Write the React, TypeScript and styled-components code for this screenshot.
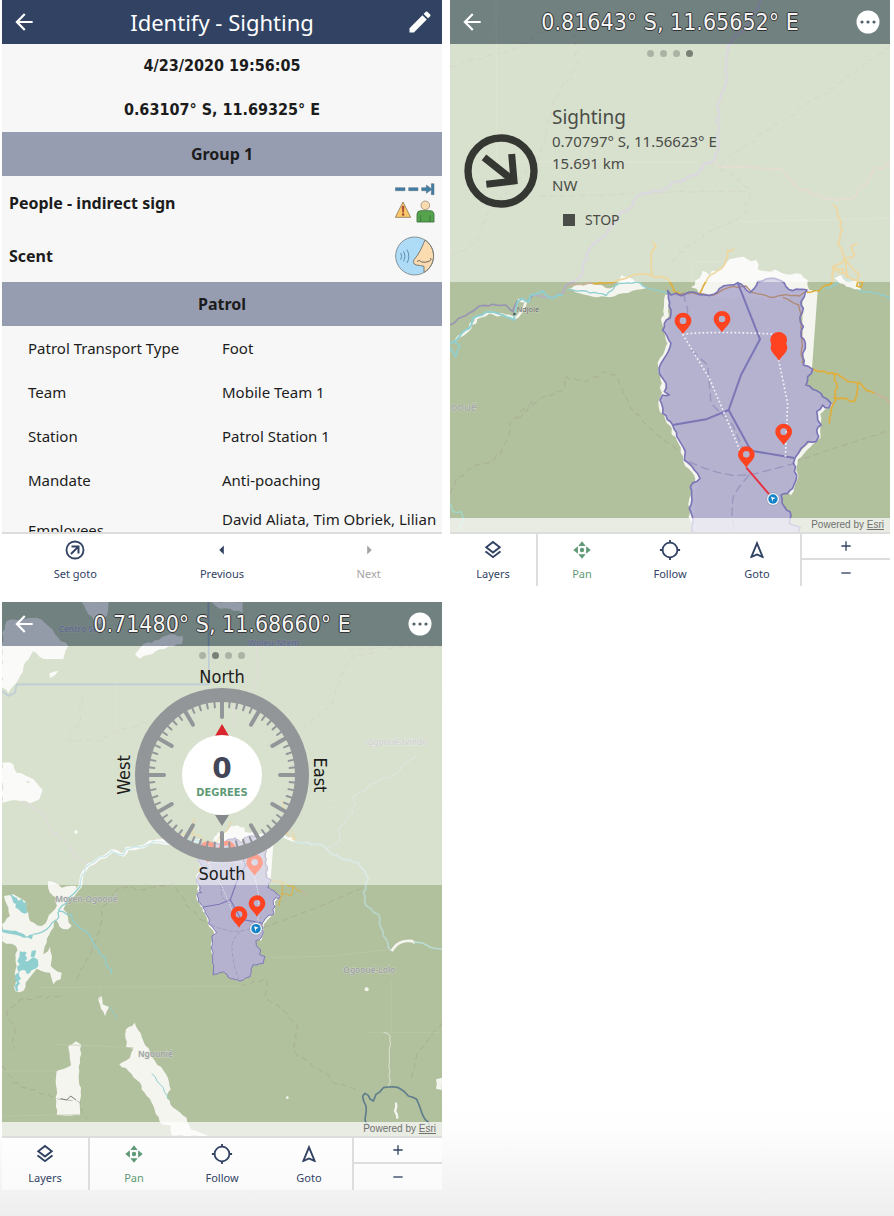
import React from "react";
import styled, { createGlobalStyle, css } from "styled-components";
import {
  MdAdd,
  MdArrowBack,
  MdArrowLeft,
  MdArrowRight,
  MdEdit,
  MdLocationSearching,
  MdOutlineLayers,
  MdOutlineNavigation,
  MdRemove,
  MdStop,
} from "react-icons/md";

const navy = "#314263";
const green = "#5f9a76";
const rule = "#dddddd";
const sans = `"Noto Sans", "Open Sans", sans-serif`;
const numeric = `"DejaVu Sans Condensed", "DejaVu Sans", sans-serif`;

const GlobalStyle = createGlobalStyle`
  * { box-sizing: border-box; }
  body { margin: 0; font-family: ${sans}; color: #1c1c1c; background: #fff; }
  button { font: inherit; color: inherit; background: none; border: 0; padding: 0; cursor: pointer; }
  h1, h2, h3, p, dl, dt, dd { margin: 0; font-weight: normal; }
`;

const Page = styled.main`
  min-height: 100vh;
  display: grid;
  grid-template-columns: repeat(2, minmax(0, 1fr));
  align-content: start;
  gap: 16px 8px;
  padding: 0 4px 24px 2px;
  background: linear-gradient(to top, #eeeeee 0, #fefefe 90px, #ffffff 120px);
`;

const Phone = styled.section`
  display: flex;
  flex-direction: column;
  min-width: 0;
`;

const TopBar = styled.header<{ $overMap?: boolean }>`
  flex: none;
  display: grid;
  grid-template-columns: 44px 1fr 44px;
  align-items: center;
  justify-items: center;
  height: 44px;
  color: #fff;
  background: ${(p) => (p.$overMap ? "rgba(49, 66, 98, 0.5)" : navy)};
`;

const Title = styled.h1<{ $outlined?: boolean }>`
  font-size: 22px;
  line-height: 44px;
  white-space: nowrap;
  ${(p) =>
    p.$outlined &&
    css`
      font-family: ${numeric};
      font-size: 23px;
      color: #f4f4f4;
      text-shadow: 1px 0 0 #333, -1px 0 0 #333, 0 1px 0 #333, 0 -1px 0 #333;
    `}
`;

const IconButton = styled.button`
  display: grid;
  place-items: center;
  width: 44px;
  height: 44px;
`;

/* Sighting record */

const Record = styled.div`
  flex: 1 1 0;
  min-height: 0;
  overflow: hidden;
  background: #f7f7f7;
`;

const Headline = styled.p`
  line-height: 44px;
  font-family: ${numeric};
  font-size: 16px;
  font-weight: bold;
  text-align: center;
`;

const GroupHeading = styled.h2`
  line-height: 44px;
  font-size: 16px;
  font-weight: bold;
  text-align: center;
  background: #979db0;
`;

const Observation = styled.div`
  display: flex;
  align-items: center;
  justify-content: space-between;
  height: 53px;
  padding: 0 7px;
  font-size: 16px;
  font-weight: bold;
`;

const Field = styled.div`
  display: grid;
  grid-template-columns: 194px 1fr;
  align-items: center;
  min-height: 44px;
  padding-left: 26px;
  font-size: 15px;
  line-height: 22px;
`;

const TallField = styled(Field)`
  min-height: 55px;
  dd {
    align-self: start;
    padding-top: 6px;
    white-space: nowrap;
  }
`;

/* Bottom bars */

const BottomBar = styled.nav<{ $columns: number }>`
  flex: none;
  display: grid;
  grid-template-columns: repeat(${(p) => p.$columns}, 1fr);
  height: 54px;
  border-top: 2px solid ${rule};
  background: rgba(255, 255, 255, 0.6);
`;

const BarButton = styled.button<{ $tone?: string; $divided?: boolean }>`
  display: flex;
  flex-direction: column;
  align-items: center;
  gap: 6px;
  padding-top: 5px;
  font-size: 11px;
  line-height: 14px;
  color: ${(p) => p.$tone ?? navy};
  border-right: ${(p) => (p.$divided ? `2px solid ${rule}` : "0")};
  svg {
    flex: none;
    width: 22px;
    height: 22px;
  }
`;

const ZoomStack = styled.div`
  display: grid;
  grid-template-rows: 1fr 1fr;
  color: ${navy};
`;

const ZoomButton = styled.button<{ $top?: boolean }>`
  display: grid;
  place-items: center;
  border-bottom: ${(p) => (p.$top ? `2px solid ${rule}` : "0")};
`;

/* Map screens */

const Stage = styled.div<{ $ratio: string }>`
  display: grid;
  aspect-ratio: ${(p) => p.$ratio};
  overflow: hidden;
  > * {
    grid-area: 1 / 1;
    min-width: 0;
    min-height: 0;
  }
`;

const MapCanvas = styled.svg`
  display: block;
  width: 100%;
  height: 100%;
  font-family: "Noto Sans", sans-serif;
`;

const StageLayers = styled.div`
  z-index: 1;
  display: flex;
  flex-direction: column;
`;

const Overlay = styled.div`
  display: flex;
  flex-direction: column;
  align-items: center;
  min-height: 238px;
  background: rgba(255, 255, 255, 0.5);
`;

const Pager = styled.div`
  display: flex;
  gap: 6px;
  padding: 6px 0 5px;
`;

const Dot = styled.span<{ $active: boolean }>`
  width: 7px;
  height: 7px;
  border-radius: 50%;
  background: ${(p) => (p.$active ? "#7a8076" : "#abb3a5")};
`;

const Attribution = styled.p`
  margin-top: auto;
  padding: 0 6px;
  text-align: right;
  font: 10px/14px "Liberation Sans", sans-serif;
  color: #707070;
  background: rgba(255, 255, 255, 0.7);
  a {
    color: inherit;
  }
`;

const Target = styled.div`
  align-self: stretch;
  display: grid;
  grid-template-columns: 74px 1fr;
  gap: 14px;
  align-items: center;
  padding: 42px 14px 0;
  color: #4a4c47;
`;

const TargetText = styled.div`
  padding-bottom: 6px;
  font-size: 15px;
  line-height: 22px;
  h2 {
    font-size: 19px;
    line-height: 26px;
  }
`;

const StopButton = styled.button`
  display: flex;
  align-items: center;
  gap: 4px;
  margin: 12px 0 0 5px;
  font-size: 14px;
  line-height: 24px;
`;

/* ---------- geometry helpers ---------- */

type Pt = [number, number];

function parse(list: string): Pt[] {
  return list
    .trim()
    .split(/\s+/)
    .map((pair) => pair.split(",").map(Number) as Pt);
}

/* Turns a coarse outline into a ragged natural line. */
function rough(list: string, amp = 5, closed = false, step = 13): string {
  const pts = parse(list);
  let seed = pts.length * 7919 + Math.round(pts[0][0]);
  const rnd = () => {
    seed = (seed * 16807) % 2147483647;
    return seed / 2147483647 - 0.5;
  };
  const out: string[] = [];
  const last = closed ? pts.length : pts.length - 1;
  for (let i = 0; i < last; i++) {
    const [x1, y1] = pts[i];
    const [x2, y2] = pts[(i + 1) % pts.length];
    const len = Math.hypot(x2 - x1, y2 - y1) || 1;
    const n = Math.max(1, Math.round(len / step));
    for (let k = 0; k < n; k++) {
      const off = k === 0 ? 0 : rnd() * 2 * amp;
      const x = x1 + ((x2 - x1) * k) / n - ((y2 - y1) / len) * off;
      const y = y1 + ((y2 - y1) * k) / n + ((x2 - x1) / len) * off;
      out.push(`${x.toFixed(1)},${y.toFixed(1)}`);
    }
  }
  if (!closed) out.push(pts[pts.length - 1].join(","));
  return `M${out.join("L")}${closed ? "Z" : ""}`;
}

const land = "#f5f5f0";
const water = "#8fcfd0";
const road = "#dfae3c";

const parkOutline = `665,872 675,885 690,880 705,887 740,876 760,884 790,886 805,882 820,866 850,855
 875,848 895,862 912,878 925,865 935,845 960,837 985,835 1005,842 1020,860 1040,872 1060,868 1083,870
 1075,890 1065,905 1072,925 1062,950 1072,980 1065,1010 1078,1030 1070,1060 1072,1095 1100,1108
 1085,1130 1080,1155 1100,1168 1125,1180 1130,1190 1155,1210 1148,1224 1130,1215 1112,1235 1115,1260 1125,1275
 1112,1290 1118,1310 1110,1325 1085,1325 1065,1345 1048,1372 1042,1390 1052,1425 1040,1465 1025,1480
 1005,1485 1015,1520 1032,1535 1030,1570 1062,1582 1052,1624 986,1634 970,1706 904,1733 846,1716
 805,1675 743,1696 740,1595 742,1560 730,1525 738,1500 733,1460 762,1435 745,1410 715,1380 718,1355
 705,1330 680,1275 650,1240 642,1200 650,1185 670,1185 655,1175 660,1150 640,1120 645,1090 675,1030
 650,990 655,970 672,955 675,930`;

/* The reserve with the rivers and roads next to it; w scales line widths. */
const Reserve = ({ w = 1 }: { w?: number }) => (
  <g fill="none" strokeLinejoin="round">
    <path
      fill={land}
      d={rough("735,862 770,812 790,825 835,795 850,778 880,772 930,780 935,808 1000,815 1050,820 1085,840 1090,870 1000,900 800,890 760,880", 6, true)}
    />
    <path fill={land} d="M1070,868L1115,872L1098,1105L1068,1105Z" />
    <path fill={land} d={rough("365,868 385,857 440,853 495,865 515,850 525,825 548,830 572,848 600,865 560,872 530,880 490,892 455,892 400,880", 4, true)} />
    <path stroke={land} strokeWidth={14} d={rough("665,885 655,970 672,1030 642,1090 655,1150 645,1220 705,1330 718,1380 755,1435 736,1500 742,1590", 5)} />
    <path stroke={land} strokeWidth={12} d={rough("1155,1210 1116,1240 1118,1310 1050,1375 1048,1440 1030,1482", 4)} />
    <path stroke={water} strokeWidth={4 * w} d={rough("365,868 420,873 480,887 500,870 520,850 570,846 600,862 640,872 665,880", 4)} />
    <path stroke={water} strokeWidth={4 * w} d={rough("1100,872 1160,858 1180,838 1215,845 1240,872 1280,878 1310,885 1332,895", 5)} />
    <path fill={land} d={rough("1165,835 1185,825 1200,845 1235,840 1245,870 1225,868 1180,850", 4, true)} />
    <g stroke={road} strokeWidth={5 * w}>
      <path d={rough("440,850 500,848 560,825 585,822 620,828 665,836 685,875 705,884 760,882 785,835 835,795 845,752 865,746", 3)} />
      <path d={rough("620,828 615,760 630,740 620,725", 3)} />
      <path d={rough("1083,877 1120,872 1155,852 1160,800 1195,780 1175,730 1188,690 1175,640 1162,614", 5)} />
      <path d={rough("1195,780 1225,765 1215,740 1235,732", 4)} />
      <path d={rough("1160,800 1190,808 1205,832 1195,780 1215,800 1240,822 1232,858 1245,862 1250,845 1225,840 1160,800", 4)} />
      <path d={rough("1072,1100 1120,1115 1160,1118 1172,1150 1165,1195 1200,1195 1225,1205 1235,1150 1205,1145 1165,1120", 4)} />
      <path d={rough("1235,1145 1262,1172 1285,1180", 3)} />
      <path d={rough("1170,1190 1155,1240 1150,1270", 3)} />
    </g>
    <path stroke="#cdb09a" strokeWidth={4 * w} d={rough("370,855 410,853 440,848", 2)} />
    <path stroke="#cdb09a" strokeWidth={4 * w} d={rough("1285,1180 1320,1195 1334,1210", 2)} />
    <path fill="#b5b1d1" fillOpacity={0.96} d={rough(parkOutline, 4, true)} />
    <path stroke="#b08a77" strokeWidth={4 * w} d={rough("690,884 740,878 800,886 850,862 900,858 920,878 985,892 1020,884 1060,888 1083,872", 3)} />
    <path stroke="#b08a77" strokeWidth={4 * w} d={rough("1010,892 1058,915 1066,970 1068,1090", 3)} />
    <g stroke="#9a95bd" strokeWidth={4 * w} strokeDasharray="26 12">
      <path d="M712,880L725,930L722,960M735,1050L785,1095L795,1210L860,1275L890,1345" />
      <path d="M730,1385Q790,1415 860,1426Q900,1428 940,1418L1046,1390M910,1425Q860,1480 860,1500L858,1550L875,1650L900,1720" />
    </g>
    <path stroke="#7b76b6" strokeWidth={5 * w} d={rough(parkOutline, 4, true)} />
    <path stroke="#7b76b6" strokeWidth={6 * w} d="M875,848L942,1018L885,1125L848,1230L780,1258L680,1275M848,1230L915,1352L1045,1374" />
    <g stroke="#ffffff" strokeWidth={5 * w} strokeDasharray={`${5 * w} ${7 * w}`} opacity={0.85}>
      <path d="M710,1003Q800,992 998,1003M710,1003L790,1135L835,1240L900,1395" />
      <path d="M998,1080L1025,1210L1018,1375" />
    </g>
  </g>
);

const Pin = ({ x, y, solid }: { x: number; y: number; solid?: boolean }) => (
  <path
    transform={`translate(${x} ${y})`}
    fill="#ff421f"
    fillRule="evenodd"
    d={`M0,0C-8,-14 -25,-24 -25,-40A25,24 0 0 1 25,-40C25,-24 8,-14 0,0Z${
      solid ? "" : "M-10,-40A10,10 0 1 0 10,-40A10,10 0 1 0 -10,-40Z"
    }`}
  />
);

const Position = ({ x, y }: { x: number; y: number }) => (
  <g transform={`translate(${x} ${y})`}>
    <circle r={20} fill="#8f93a8" opacity={0.6} />
    <circle r={18} fill="#f3f5fa" />
    <circle r={14} fill="#1583c6" />
    <path d="M-6,-7L8,-3L0,1L-1,9Z" fill="#fff" />
  </g>
);

const MapLabel = styled.text<{ $fill?: string }>`
  fill: ${(p) => p.$fill ?? "#a0a3a6"};
  stroke: #d9ddd3;
  stroke-width: 3px;
  stroke-opacity: 0.7;
  paint-order: stroke;
`;

const GotoMap = () => (
  <MapCanvas viewBox="12 0 1320 1596" preserveAspectRatio="xMidYMid slice" role="img" aria-label="Map of the reserve">
    <rect x={-1000} y={-1000} width={4000} height={4000} fill="#b1c09d" />
    <g fill="none" strokeLinejoin="round">
      <g stroke="#a9a894" strokeWidth={3} strokeDasharray="18 12" opacity={0.75}>
        <path d={rough("12,200 80,180 200,150 350,60 390,110 395,200 330,290 300,400 280,470 180,580 120,650 90,730 12,770", 6)} />
        <path d={rough("1332,140 1150,270 1000,370 850,470 820,500 880,540 910,575 890,650 800,690 720,740 680,790", 6)} />
        <path d={rough("280,590 500,585 700,575 905,574", 2)} />
        <path d={rough("215,1255 280,1200 355,1165 360,1130 420,1145 475,1115 510,1125 545,1200 560,1230 620,1290 730,1380", 5)} />
        <path d={rough("12,1480 30,1440 90,1395 120,1390 165,1360 190,1300 190,1270 260,1200", 5)} />
        <path d="M1046,1385L1150,1350L1334,1290" />
      </g>
      <g stroke="#c3ceb2" strokeWidth={2}>
        <path d="M150,0L152,485L752,487M740,785H840M740,785V860M880,665L1332,655" />
      </g>
      <path stroke="#b6b1be" strokeWidth={7} d={rough("945,0 920,50 880,100 845,140 840,250 815,310 818,440 805,480 770,500 750,525 690,545 650,570 585,582 550,625 520,640 485,700 430,745 410,800 405,830 360,855 350,880 310,893 260,885", 5)} />
      <path stroke="#9a94b4" strokeWidth={5} d={rough("260,885 245,905 215,900 200,935 180,915 100,918 50,950 12,975", 4)} />
      <path stroke="#d3b7a8" strokeWidth={4} d={rough("805,482 820,500 900,500 1010,510 1050,560 1140,600 1220,595 1255,555 1280,510 1332,495", 5)} />
      <path stroke={land} strokeWidth={8} d={rough("215,900 240,905 235,920 205,955 190,948 130,936 90,955 72,985 30,1020", 5)} />
      <path stroke={water} strokeWidth={6} d={rough("350,885 310,893 290,873 255,885 250,905 230,895 215,905 205,960 170,945 120,936 80,955 70,985 40,1010 12,1030", 4)} />
      <path stroke={water} strokeWidth={5} d={rough("25,1025 42,1040 28,1070 12,1040", 4)} />
      <path stroke="#9fd8cc" strokeWidth={4} d={rough("12,1510 20,1535 45,1535 52,1560 40,1590", 4)} />
    </g>
    <Reserve />
    <circle cx={205} cy={942} r={4} fill="#555" />
    <MapLabel x={212} y={936} fontSize={22} $fill="#666">
      Ndjolé
    </MapLabel>
    <MapLabel x={14} y={1232} fontSize={33}>
      ooué
    </MapLabel>
    <Pin x={711} y={1002} />
    <Pin x={828} y={997} />
    <Pin x={998} y={1060} solid />
    <Pin x={999} y={1082} solid />
    <Pin x={1013} y={1335} />
    <path d="M901,1403L980,1495" stroke="#e83243" strokeWidth={6} />
    <Pin x={901} y={1403} />
    <Position x={981} y={1497} />
  </MapCanvas>
);

const CompassMap = () => (
  <MapCanvas viewBox="6 18 1320 1602" preserveAspectRatio="xMidYMid slice" role="img" aria-label="Map of the region">
    <rect x={-1000} y={-1000} width={4000} height={4000} fill="#b1c09d" />
    <g fill={land}>
      <path d={rough("6,110 20,75 75,68 110,65 145,90 165,115 205,150 190,190 130,188 100,165 75,200 60,240 48,262 25,290 6,275", 4, true)} />
      <path d={rough("405,175 430,145 455,140 510,115 548,120 545,145 480,160 420,188", 4, true)} />
      <path d={rough("245,18 325,18 320,60 300,85 265,55", 4, true)} />
      <path d={rough("635,18 728,18 728,50 690,38 660,38", 4, true)} />
      <path d={rough("148,232 175,224 165,238 150,246", 2, true)} />
      <path d={rough("6,552 110,560 128,582 118,610 90,622 60,615 6,620", 5, true)} />
      <path d={rough("6,500 40,505 50,530 110,560 6,560", 5, true)} />
      <path d={rough("145,855 185,875 230,870 225,900 200,915 190,940 215,990 190,1000 165,970 140,1040 130,1075 150,1052 152,1110 185,1130 182,1150 160,1165 150,1130 110,1118 85,1150 70,1185 45,1185 50,1110 48,1050 6,1035 6,985 30,960 12,900 40,895 75,915 90,975 125,990 165,940 168,905 150,890", 5, true)} />
      <path d={rough("170,1425 213,1408 205,1350 228,1336 244,1346 240,1400 236,1440 243,1500 240,1558 170,1557", 3, true)} />
      <path d={rough("378,1300 404,1280 430,1335 465,1395 498,1435 512,1480 500,1505 520,1535 560,1565 572,1600 635,1620 515,1618 512,1588 485,1585 455,1520 425,1480 420,1460 385,1425 358,1405 390,1385 400,1358 378,1352", 3, true)} />
      <path d={rough("295,1205 305,1200 308,1225 328,1232 315,1260 300,1225", 3, true)} />
      <path d={rough("1308,1450 1326,1445 1326,1482 1308,1478", 3, true)} />
      <circle cx={1100} cy={1180} r={6} />
      <circle cx={862} cy={1505} r={4} />
      <circle cx={228} cy={708} r={5} />
    </g>
    <g fill={water}>
      <path d={rough("28,895 50,905 80,920 82,950 60,945 40,920", 6, true, 8)} />
      <path d={rough("60,1065 80,1070 75,1095 105,1085 115,1110 90,1130 60,1125 55,1185 47,1185 52,1120", 6, true, 8)} />
      <path d={rough("95,1065 108,1062 102,1085 92,1082", 3, true)} />
      <path d={rough("6,1000 60,1010 80,1022 100,1015 95,1030 60,1020 6,1008", 3, true)} />
    </g>
    <g fill="none" strokeLinejoin="round">
      <path stroke="#7f9aae" strokeWidth={5} d="M625,18L627,265L50,265L45,290L25,300L6,285" />
      <g stroke="#a9a894" strokeWidth={3} strokeDasharray="18 12" opacity={0.7}>
        <path d={rough("245,300 240,380 200,430 290,435 360,400 440,380", 5)} />
        <path d={rough("1120,170 1060,180 1010,270 990,330 900,400 800,450", 5)} />
        <path d={rough("1330,150 1050,160", 3)} />
        <path d={rough("230,1150 290,1030 310,930 360,870 420,880 520,860 560,930 600,970 640,985", 5)} />
        <path d={rough("180,1200 60,1210 20,1250 45,1300 40,1360", 5)} />
        <path d={rough("6,1410 40,1460 130,1495 200,1512 240,1520 260,1570", 5)} />
        <path d={rough("720,1170 800,1150 795,1200 890,1280 885,1370 960,1420 1010,1465 1080,1482", 5)} />
        <path d="M790,995L950,935L1100,870" />
        <path d={rough("1326,1280 1260,1360 1230,1450", 4)} />
      </g>
      <g stroke="#bdc9ac" strokeWidth={2}>
        <path d="M350,265V430M1005,300H1326M170,1345L400,1355M6,1425H170M6,1560L240,1556M1100,1310H1326M1175,1150V1310M120,1175L730,1170M1000,480V620M810,1085L1000,1080L1170,1060M980,635H1326M300,1170V1210" />
      </g>
      <path stroke="#bfb9b5" strokeWidth={4} d={rough("770,150 775,250 700,340 705,400", 5)} />
      <path stroke="#bfb9b5" strokeWidth={4} d={rough("60,615 130,650 150,700 200,740 225,780 265,805", 4)} />
      <path stroke={land} strokeWidth={10} d={rough("600,735 495,737 460,737 430,752 380,757 370,777 335,765 265,807 245,840 240,872 210,902", 4)} />
      <path stroke={water} strokeWidth={4} d={rough("600,735 495,737 460,737 430,752 380,757 370,777 335,765 265,807 245,840 240,872 210,902 178,940 170,972 140,1000 100,1015", 4)} />
      <path stroke={water} strokeWidth={4} d={rough("178,945 215,955 230,985 270,1020 285,1055 310,1080 335,1135", 5)} />
      <path stroke="#b9d3c6" strokeWidth={6} d={rough("860,725 900,740 960,745 985,765 1020,785 1075,800 1105,850 1090,890 1100,930 1135,955 1150,1020 1175,1065", 4)} />
      <path stroke={land} strokeWidth={8} d={rough("1175,1065 1200,1040 1220,1035 1245,1040", 4)} />
      <path stroke="#b9dcd2" strokeWidth={5} d={rough("1240,1038 1280,1048 1326,1060", 4)} />
      <path stroke="#b9d3c6" strokeWidth={3} d={rough("975,760 1015,740 1020,690 1060,650 1060,600 1130,560 1190,530 1250,480", 5)} />
      <path stroke={water} strokeWidth={3} d={rough("455,1433 490,1475 505,1510", 3)} />
      <path stroke={water} strokeWidth={3} d={rough("325,1232 350,1268", 3)} />
      <path stroke="#dfe3d3" strokeWidth={3} d={rough("1150,1308 1170,1318 1168,1400 1170,1450 1165,1470", 3)} />
      <path stroke={land} strokeWidth={7} d={rough("1188,1520 1185,1545 1192,1568", 4)} />
      <path stroke="#5f7d8b" strokeWidth={5} d={rough("1110,1600 1095,1570 1098,1530 1088,1500 1095,1492 1120,1515 1128,1495 1150,1475 1195,1475 1225,1500 1250,1510 1262,1540 1275,1570 1290,1590", 3)} />
      <path stroke="#777" strokeWidth={3} d="M182,1508L200,1512L212,1500L228,1512" />
    </g>
    <g transform="matrix(0.485 0 0 0.485 279.7 314.5)">
      <Reserve w={1.2} />
    </g>
    <g fontSize={25} fontWeight={600}>
      <MapLabel x={176} y={108} $fill="#8f92b5">Centro Sur</MapLabel>
      <MapLabel x={745} y={150} $fill="#9a98bd">Woleu-Ntem</MapLabel>
      <MapLabel x={1100} y={446}>Ogooué-Ivindo</MapLabel>
      <MapLabel x={166} y={917}>Moyen-Ogooué</MapLabel>
      <MapLabel x={1030} y={1131}>Ogooué-Lolo</MapLabel>
      <MapLabel x={414} y={1384}>Ngounié</MapLabel>
    </g>
    <Pin x={624} y={800} />
    <Pin x={681} y={798} />
    <Pin x={764} y={839} />
    <Pin x={771} y={962} />
    <Pin x={717} y={995} />
    <Position x={768} y={998} />
  </MapCanvas>
);

/* ---------- drawn icons ---------- */

const MoreIcon = () => (
  <svg width={24} height={24} viewBox="0 0 24 24" aria-hidden="true">
    <circle cx={12} cy={12} r={11.5} fill="#fff" />
    <g fill="#52606a">
      <circle cx={6} cy={12} r={1.6} />
      <circle cx={12} cy={12} r={1.6} />
      <circle cx={18} cy={12} r={1.6} />
    </g>
  </svg>
);

const SetGotoIcon = () => (
  <svg viewBox="0 0 24 24" fill="none" stroke="currentColor" strokeWidth={2} aria-hidden="true">
    <circle cx={12} cy={12} r={9.3} />
    <path d="M7.6,16.4L15.4,8.6M8.2,8.2H15.8V15.8" strokeWidth={2.2} />
  </svg>
);

const PanIcon = () => (
  <svg viewBox="0 0 24 24" fill="currentColor" aria-hidden="true">
    <circle cx={12} cy={12} r={2.4} />
    <path d="M12,2.5L16,7.5H8ZM12,21.5L8,16.5H16ZM2.5,12L7.5,8V16ZM21.5,12L16.5,16V8Z" />
  </svg>
);

const TrackSignIcon = () => (
  <svg width={40} height={40} viewBox="0 0 120 120" aria-hidden="true">
    <g fill="#3f7ea6" stroke="#5b6d79" strokeWidth={1.5}>
      <path d="M1,14H30V23H1ZM41,14H69V23H41Z" />
      <path d="M80,14H94V6L109,17V2H117V35H109V20L94,31V23H80Z" />
    </g>
    <path d="M24,57L47,103H1Z" fill="#fbc968" stroke="#8d7a5c" strokeWidth={2.5} strokeLinejoin="round" />
    <path d="M21.500,70H27L25.500,88H23ZM22,92H27V97H22Z" fill="#9b3a34" stroke="#9b3a34" strokeWidth={1.5} />
    <circle cx={91} cy={67} r={13} fill="#fbdcb0" stroke="#857b6b" strokeWidth={2} />
    <path d="M66,117V94Q66,83 78,83H104Q117,83 117,94V117Z" fill="#55a44d" stroke="#39703a" strokeWidth={2.5} />
    <path d="M77,117V97M105,117V97" stroke="#39703a" strokeWidth={2.5} />
  </svg>
);

const ScentIcon = () => (
  <svg width={40} height={40} viewBox="0 0 120 120" aria-hidden="true">
    <circle cx={59} cy={60} r={57} fill="#aedcf7" />
    <path
      d="M90,12A57,57 0 0 1 87,109V91Q76,88 64,87Q56,86 55,77Q56,71 61,66Q75,50 90,12Z"
      fill="#fbdcb0"
      stroke="#6c6862"
      strokeWidth={2.5}
    />
    <path d="M66,76Q74,70 80,78Q92,81 104,75Q110,72 107,66" fill="none" stroke="#6c6862" strokeWidth={3} />
    <path d="M17,51Q23,61 17,71M26,46Q34,61 26,76M36,41Q47,61 36,81" fill="none" stroke="#5f91b5" strokeWidth={3} />
    <circle cx={59} cy={60} r={57} fill="none" stroke="#77817f" strokeWidth={2.5} />
  </svg>
);

const BearingIcon = () => (
  <svg width={74} height={74} viewBox="55 405 222 222" fill="none" stroke="#353733" aria-label="Bearing" role="img">
    <circle cx={166} cy={516} r={99} strokeWidth={22} />
    <path d="M115,475L203,545" strokeWidth={22} />
    <path d="M198,465L205,546L122,556" strokeWidth={21} />
  </svg>
);

const Compass = () => (
  <svg width={232} height={221} viewBox="-116 -111 232 221" role="img" aria-label="Compass" fontFamily={numeric}>
    <circle r={80} fill="none" stroke="#939699" strokeWidth={14} />
    <g stroke="#939699" strokeLinecap="round">
      {Array.from({ length: 60 }, (_, i) => {
        const major = i % 5 === 0;
        return (
          <line
            key={i}
            y1={-74}
            y2={major ? -58 : -68}
            strokeWidth={major ? 4 : 2}
            transform={`rotate(${i * 6})`}
          />
        );
      })}
    </g>
    <path d="M0,-51L7,-39H-7Z" fill="#d9252c" />
    <path d="M0,51L7,40H-7Z" fill="#85898c" />
    <circle r={40} fill="#fff" />
    <g textAnchor="middle" fill="#1c1c1c" fontSize={18}>
      <text y={-92}>North</text>
      <text y={105}>South</text>
      <text transform="translate(-92 0) rotate(-90)">West</text>
      <text transform="translate(92 0) rotate(90)">East</text>
      <text y={3} fontFamily='"DejaVu Sans", sans-serif' fontSize={28} fontWeight="bold" fill="#434559">
        0
      </text>
      <text y={21} fontSize={11} fontWeight="bold" fill={green}>
        DEGREES
      </text>
    </g>
  </svg>
);

/* ---------- screens ---------- */

const MapHeader = ({ title }: { title: string }) => (
  <TopBar $overMap>
    <IconButton aria-label="Back">
      <MdArrowBack size={26} />
    </IconButton>
    <Title $outlined>{title}</Title>
    <IconButton aria-label="More">
      <MoreIcon />
    </IconButton>
  </TopBar>
);

const PageDots = ({ active }: { active: number }) => (
  <Pager>
    {[0, 1, 2, 3].map((i) => (
      <Dot key={i} $active={i === active} />
    ))}
  </Pager>
);

const MapTools = () => (
  <BottomBar $columns={5}>
    <BarButton $divided>
      <MdOutlineLayers />
      Layers
    </BarButton>
    <BarButton $tone={green}>
      <PanIcon />
      Pan
    </BarButton>
    <BarButton>
      <MdLocationSearching />
      Follow
    </BarButton>
    <BarButton $divided>
      <MdOutlineNavigation />
      Goto
    </BarButton>
    <ZoomStack>
      <ZoomButton $top aria-label="Zoom in">
        <MdAdd size={16} />
      </ZoomButton>
      <ZoomButton aria-label="Zoom out">
        <MdRemove size={16} />
      </ZoomButton>
    </ZoomStack>
  </BottomBar>
);

const MapCredit = () => (
  <Attribution>
    Powered by <a href="#esri">Esri</a>
  </Attribution>
);

const fields = [
  ["Patrol Transport Type", "Foot"],
  ["Team", "Mobile Team 1"],
  ["Station", "Patrol Station 1"],
  ["Mandate", "Anti-poaching"],
];

export default function App() {
  return (
    <>
      <GlobalStyle />
      <Page>
        <Phone>
          <TopBar>
            <IconButton aria-label="Back">
              <MdArrowBack size={26} />
            </IconButton>
            <Title>Identify - Sighting</Title>
            <IconButton aria-label="Edit">
              <MdEdit size={28} />
            </IconButton>
          </TopBar>
          <Record>
            <Headline>4/23/2020 19:56:05</Headline>
            <Headline>0.63107° S, 11.69325° E</Headline>
            <GroupHeading>Group 1</GroupHeading>
            <Observation>
              People - indirect sign
              <TrackSignIcon />
            </Observation>
            <Observation>
              Scent
              <ScentIcon />
            </Observation>
            <GroupHeading>Patrol</GroupHeading>
            <dl>
              {fields.map(([name, value]) => (
                <Field key={name}>
                  <dt>{name}</dt>
                  <dd>{value}</dd>
                </Field>
              ))}
              <TallField>
                <dt>Employees</dt>
                <dd>David Aliata, Tim Obriek, Lilian</dd>
              </TallField>
            </dl>
          </Record>
          <BottomBar $columns={3}>
            <BarButton>
              <SetGotoIcon />
              Set goto
            </BarButton>
            <BarButton>
              <MdArrowLeft />
              Previous
            </BarButton>
            <BarButton $tone="#a3a3a3">
              <MdArrowRight />
              Next
            </BarButton>
          </BottomBar>
        </Phone>

        <Phone>
          <Stage $ratio="440 / 532">
            <GotoMap />
            <StageLayers>
              <MapHeader title="0.81643° S, 11.65652° E" />
              <Overlay>
                <PageDots active={3} />
                <Target>
                  <BearingIcon />
                  <TargetText>
                    <h2>Sighting</h2>
                    <p>0.70797° S, 11.56623° E</p>
                    <p>15.691 km</p>
                    <p>NW</p>
                    <StopButton>
                      <MdStop size={24} />
                      STOP
                    </StopButton>
                  </TargetText>
                </Target>
              </Overlay>
              <MapCredit />
            </StageLayers>
          </Stage>
          <MapTools />
        </Phone>

        <Phone>
          <Stage $ratio="440 / 534">
            <CompassMap />
            <StageLayers>
              <MapHeader title="0.71480° S, 11.68660° E" />
              <Overlay>
                <PageDots active={1} />
                <Compass />
              </Overlay>
              <MapCredit />
            </StageLayers>
          </Stage>
          <MapTools />
        </Phone>
      </Page>
    </>
  );
}
